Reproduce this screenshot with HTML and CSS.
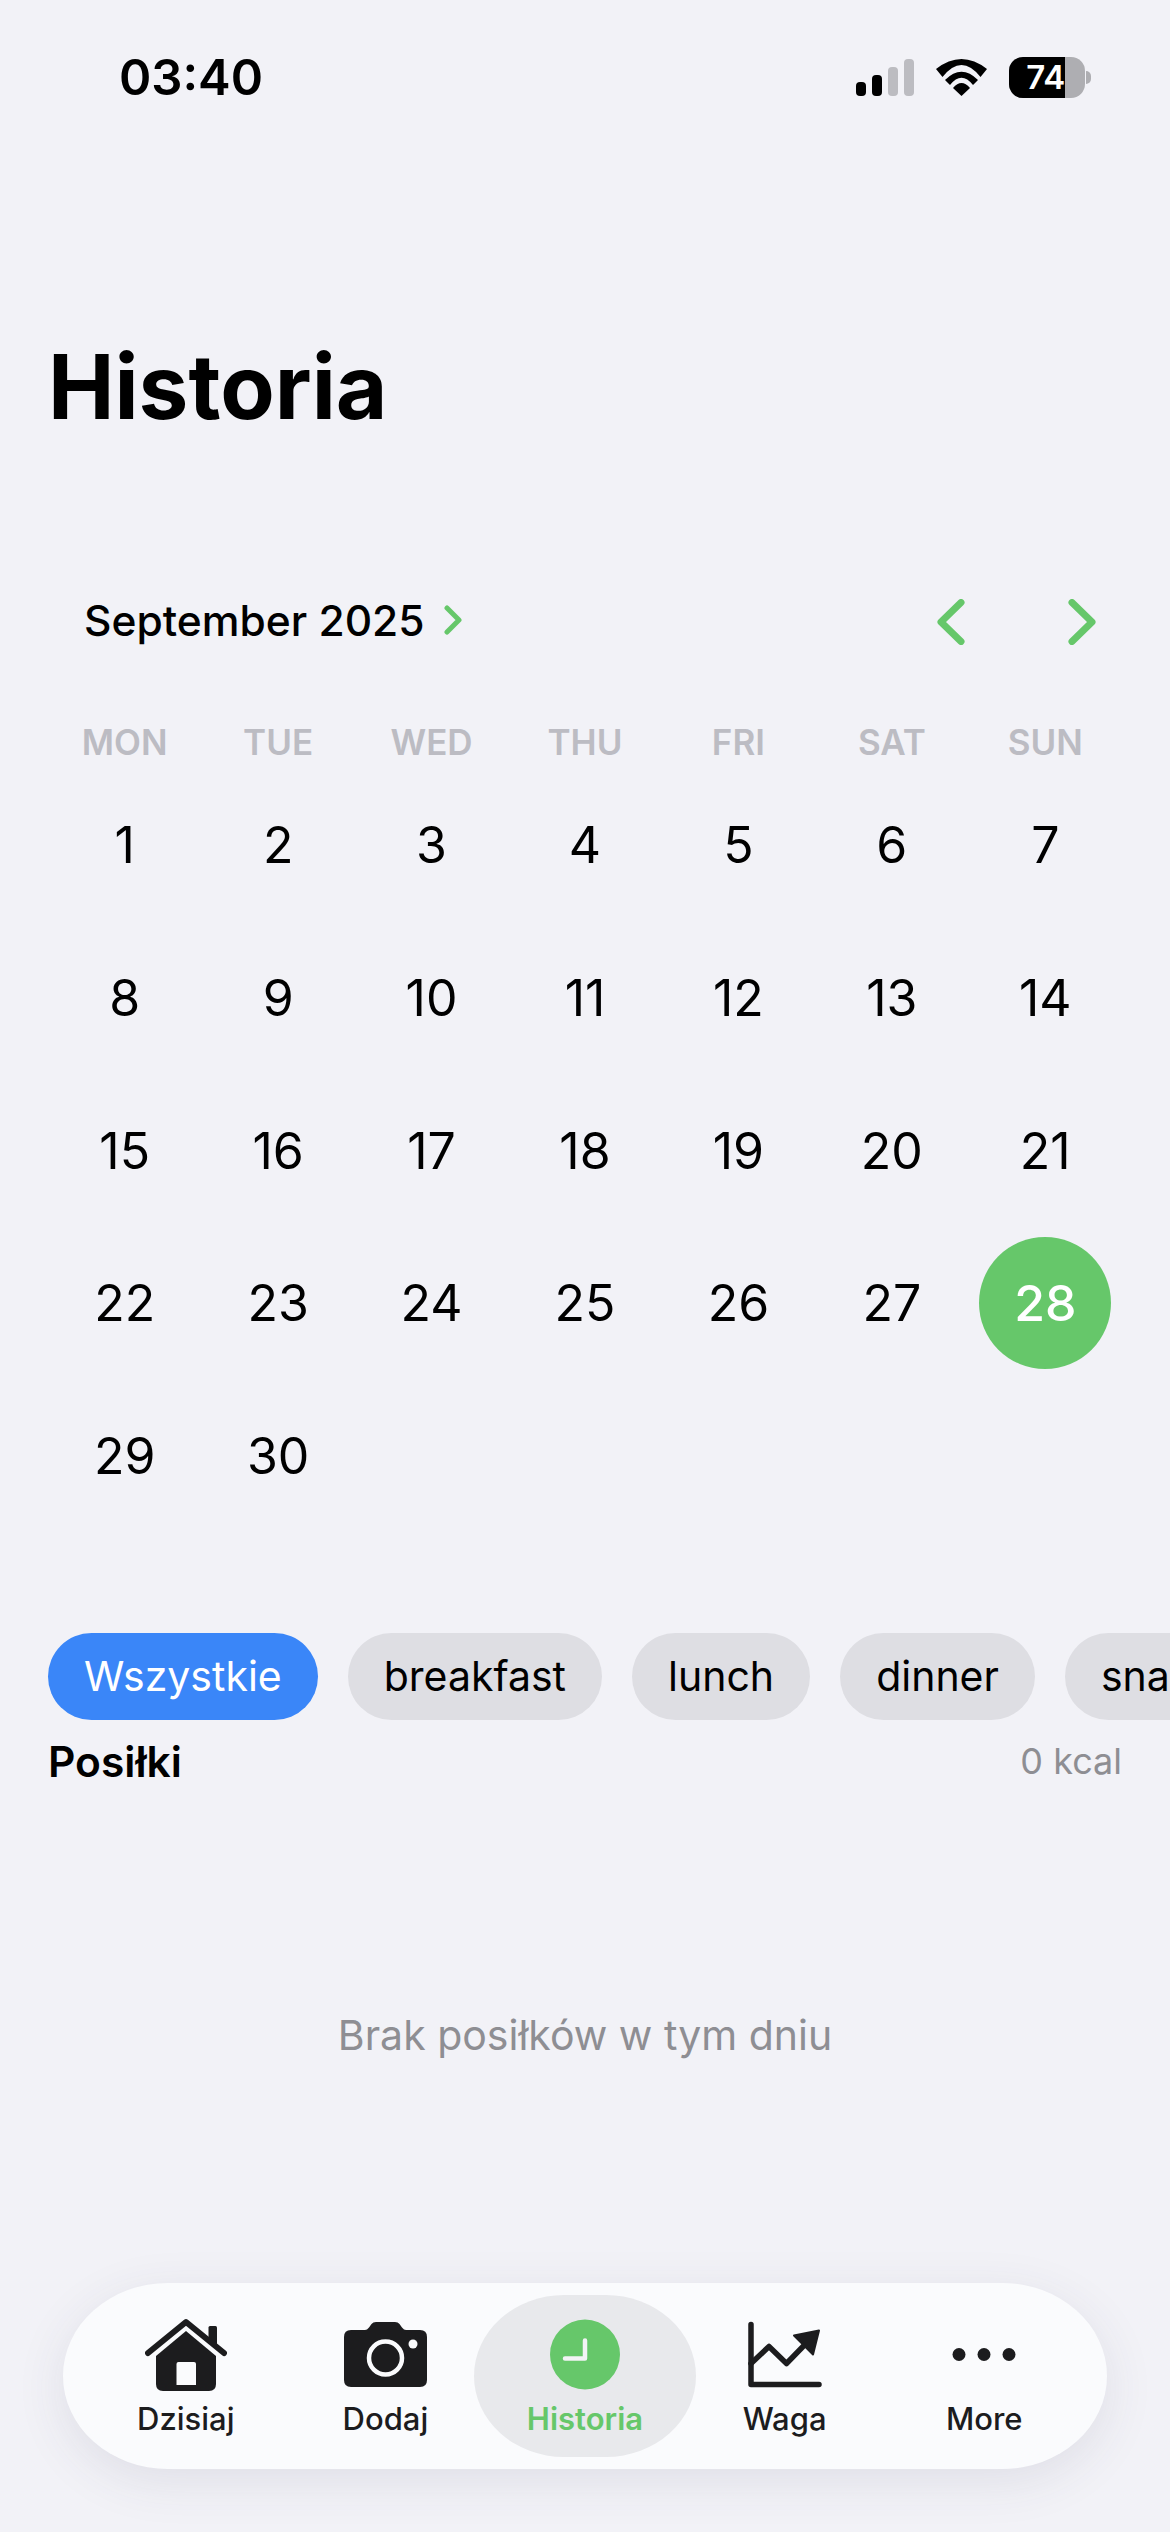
FILE: index.html
```html
<!DOCTYPE html>
<html lang="pl">
<head>
    <meta charset="UTF-8">
    <meta name="viewport" content="width=device-width, initial-scale=1.0">
    <title>Historia</title>
    <link rel="stylesheet" href="styles.css">
</head>
<body>
    <header class="status-bar">
        <div class="time">03:40</div>
        <div class="status-icons">
            <svg class="signal" width="58" height="37" viewBox="0 0 58 37">
                <rect x="0" y="23" width="10" height="14" rx="4" fill="#000"/>
                <rect x="16" y="16" width="10" height="21" rx="4" fill="#000"/>
                <rect x="32" y="8" width="10" height="29" rx="4" fill="#bcbcc1"/>
                <rect x="48" y="0" width="10" height="37" rx="4" fill="#bcbcc1"/>
            </svg>
            <svg class="wifi" width="51" height="37" viewBox="0 0 51 37">
                <path d="M0 10Q25.5 -10 51 10L44.5 18Q25.5 -6 6.500 18Z" fill="#000"/>
                <path d="M9 21Q25.500 4.400 42 21L37 26Q25.500 11.400 14 26Z" fill="#000"/>
                <path d="M17 29Q25.500 19 34 29L25.500 37Z" fill="#000"/>
            </svg>
            <div class="battery">
                <div class="battery-level"><span>74</span></div>
            </div>
            <div class="battery-tip"></div>
        </div>
    </header>

    <h1 class="page-title">Historia</h1>

    <section class="calendar">
        <div class="calendar-head">
            <div class="month">
                <span>September 2025</span>
                <svg width="18" height="30" viewBox="0 0 18 30"><path d="M3 3L15 15L3 27" class="chevron" stroke-width="5"/></svg>
            </div>
            <div class="month-nav">
                <svg width="28" height="46" viewBox="0 0 28 46"><path d="M24 3.500L4 23L24 42.500" class="chevron" stroke-width="7"/></svg>
                <svg width="28" height="46" viewBox="0 0 28 46"><path d="M4 3.500L24 23L4 42.500" class="chevron" stroke-width="7"/></svg>
            </div>
        </div>
        <div class="weekdays">
            <div>MON</div><div>TUE</div><div>WED</div><div>THU</div><div>FRI</div><div>SAT</div><div>SUN</div>
        </div>
        <div class="days">
            <div class="day">1</div><div class="day">2</div><div class="day">3</div><div class="day">4</div><div class="day">5</div><div class="day">6</div><div class="day">7</div>
            <div class="day">8</div><div class="day">9</div><div class="day">10</div><div class="day">11</div><div class="day">12</div><div class="day">13</div><div class="day">14</div>
            <div class="day">15</div><div class="day">16</div><div class="day">17</div><div class="day">18</div><div class="day">19</div><div class="day">20</div><div class="day">21</div>
            <div class="day">22</div><div class="day">23</div><div class="day">24</div><div class="day">25</div><div class="day">26</div><div class="day">27</div><div class="day"><span class="today">28</span></div>
            <div class="day">29</div><div class="day">30</div>
        </div>
    </section>

    <div class="filters">
        <div class="chip active">Wszystkie</div>
        <div class="chip">breakfast</div>
        <div class="chip">lunch</div>
        <div class="chip">dinner</div>
        <div class="chip">snack</div>
    </div>

    <div class="meals-head">
        <div class="meals-title">Posiłki</div>
        <div class="meals-kcal">0 kcal</div>
    </div>

    <main class="empty">Brak posiłków w tym dniu</main>

    <nav class="tabbar">
        <a class="tab" href="#">
            <svg class="tab-icon" width="82" height="73" viewBox="0 0 82 73">
                <path d="M63.500 9.500Q63.500 8 65 8H70.500Q72 8 72 9.500V27L63.500 20Z" fill="#1c1c1e"/>
                <path d="M3 35L41 4L79 35" fill="none" stroke="#1c1c1e" stroke-width="6" stroke-linecap="round" stroke-linejoin="round"/>
                <path d="M11 38L41 13L71 38V66Q71 73 64 73H18Q11 73 11 66Z" fill="#1c1c1e"/>
                <path d="M31.500 46Q31.500 44 33.500 44H49Q51 44 51 46V67H31.500Z" fill="#fafbfd"/>
            </svg>
            <span>Dzisiaj</span>
        </a>
        <a class="tab" href="#">
            <svg class="tab-icon" width="83" height="65" viewBox="0 0 83 65">
                <path d="M7 8H21Q23 8 25 5.500L27.500 2Q29 0 32 0H51Q54 0 55.500 2L58 5.500Q60 8 62 8H76Q83 8 83 15V58Q83 65 76 65H7Q0 65 0 58V15Q0 8 7 8Z" fill="#1c1c1e"/>
                <circle cx="41.500" cy="36" r="16.500" fill="none" stroke="#fafbfd" stroke-width="4.500"/>
                <circle cx="69" cy="22" r="4.500" fill="#fafbfd"/>
            </svg>
            <span>Dodaj</span>
        </a>
        <a class="tab current" href="#">
            <svg class="tab-icon" width="70" height="70" viewBox="0 0 70 70">
                <circle cx="35" cy="35" r="35" fill="#66c76a"/>
                <path d="M35 21V39H15" fill="none" stroke="#f2f3f5" stroke-width="4.500" stroke-linecap="round" stroke-linejoin="round"/>
            </svg>
            <span>Historia</span>
        </a>
        <a class="tab" href="#">
            <svg class="tab-icon" width="74" height="66" viewBox="0 0 74 66">
                <path d="M3 3V63H71" fill="none" stroke="#1c1c1e" stroke-width="5.500" stroke-linecap="round" stroke-linejoin="round"/>
                <path d="M3 42L21 25L38.500 42L56 24" fill="none" stroke="#1c1c1e" stroke-width="5.500" stroke-linecap="round" stroke-linejoin="round"/>
                <path d="M46 14L71 9L65 33Z" fill="#1c1c1e" stroke="#1c1c1e" stroke-width="2" stroke-linejoin="round"/>
            </svg>
            <span>Waga</span>
        </a>
        <a class="tab" href="#">
            <svg class="tab-icon" width="64" height="14" viewBox="0 0 64 14">
                <circle cx="7" cy="7" r="6.500" fill="#1c1c1e"/>
                <circle cx="32" cy="7" r="6.500" fill="#1c1c1e"/>
                <circle cx="57" cy="7" r="6.500" fill="#1c1c1e"/>
            </svg>
            <span>More</span>
        </a>
    </nav>
</body>
</html>
```

FILE: styles.css
```css
* {
    margin: 0;
    padding: 0;
    box-sizing: border-box;
}

body {
    font-family: Inter, "Noto Sans", sans-serif;
    background: #f2f2f7;
    color: #000;
    width: 1170px;
    height: 2532px;
    overflow: hidden;
    display: flex;
    flex-direction: column;
}

.status-bar {
    display: flex;
    justify-content: space-between;
    align-items: center;
    height: 154px;
    padding: 0 79px 0 119px;
}

.time {
    font-size: 49px;
    font-weight: 600;
}

.status-icons {
    display: flex;
    align-items: center;
}

.signal {
    margin-right: 22px;
}

.wifi {
    margin-right: 22px;
}

.battery {
    width: 76px;
    height: 41px;
    background: #aeaeb2;
    border-radius: 14px;
    overflow: hidden;
}

.battery-level {
    width: 74%;
    height: 100%;
    background: #000;
    color: #fff;
    font-size: 33px;
    font-weight: 600;
    display: flex;
    align-items: center;
    justify-content: flex-end;
}

.battery-tip {
    width: 5px;
    height: 13px;
    margin-left: 1px;
    background: #aeaeb2;
    border-radius: 0 6px 6px 0;
}

.page-title {
    font-size: 89px;
    font-weight: 700;
    line-height: 110px;
    margin: 178px 0 0 48px;
}

.calendar {
    padding: 0 48px;
    margin-top: 148px;
}

.calendar-head {
    display: flex;
    justify-content: space-between;
    align-items: center;
    height: 60px;
    padding: 0 26px 0 36px;
}

.month {
    display: flex;
    align-items: center;
    gap: 19px;
    font-size: 42.5px;
    font-weight: 500;
}

.month-nav {
    display: flex;
    gap: 103px;
    margin-top: 4px;
}

.chevron {
    fill: none;
    stroke: #66c76a;
    stroke-linecap: round;
    stroke-linejoin: round;
}

.weekdays {
    display: grid;
    grid-template-columns: repeat(7, 1fr);
    height: 48px;
    margin-top: 68px;
    color: #bcbcc3;
    font-size: 35px;
    font-weight: 600;
    line-height: 48px;
    text-align: center;
}

.days {
    display: grid;
    grid-template-columns: repeat(7, 1fr);
    grid-auto-rows: 152.7px;
    margin-top: 3px;
}

.day {
    display: flex;
    align-items: center;
    justify-content: center;
    font-size: 50px;
}

.today {
    display: flex;
    align-items: center;
    justify-content: center;
    width: 132px;
    height: 132px;
    border-radius: 50%;
    background: #66c76a;
    color: #fff;
    font-weight: 500;
}

.filters {
    display: flex;
    gap: 30px;
    margin-top: 101px;
    padding-left: 48px;
}

.chip {
    flex: none;
    height: 87px;
    padding: 0 36px;
    border-radius: 44px;
    background: #dedee3;
    font-size: 41px;
    line-height: 87px;
}

.chip.active {
    background: #3a86f8;
    color: #fff;
}

.meals-head {
    display: flex;
    justify-content: space-between;
    align-items: center;
    height: 50px;
    margin-top: 16px;
    padding: 0 48px;
}

.meals-title {
    font-size: 42.5px;
    font-weight: 600;
}

.meals-kcal {
    font-size: 36px;
    color: #8e8e93;
}

.empty {
    flex: 1;
    display: flex;
    align-items: center;
    justify-content: center;
    font-size: 41px;
    color: #8e8e93;
}

.tabbar {
    display: grid;
    grid-template-columns: repeat(5, 1fr);
    height: 186px;
    margin: 0 63px 63px;
    padding: 12px 23px;
    background: #fafbfd;
    border-radius: 105px / 93px;
    box-shadow: 0 12px 50px rgba(60, 60, 90, 0.1);
}

.tab {
    display: flex;
    flex-direction: column;
    align-items: center;
    color: #1c1c1e;
    font-size: 31px;
    font-weight: 500;
    text-decoration: none;
}

.tab-icon {
    height: 73px;
    margin-top: 23px;
}

.tab span {
    margin-top: 9px;
}

.tab.current {
    margin: 0 -11px;
    border-radius: 90px / 81px;
    background: #e8e9ec;
    color: #66c76a;
    font-weight: 600;
}
```
